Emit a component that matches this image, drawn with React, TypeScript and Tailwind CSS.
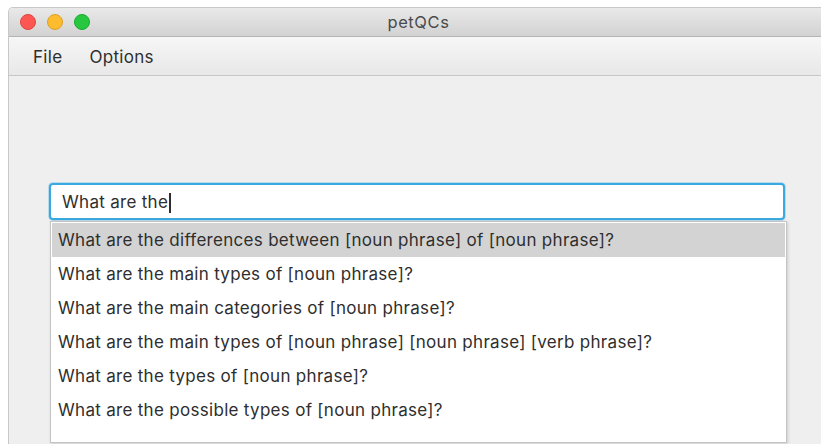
import React from "react";

const suggestions = [
  "What are the differences between [noun phrase] of [noun phrase]?",
  "What are the main types of [noun phrase]?",
  "What are the main categories of [noun phrase]?",
  "What are the main types of [noun phrase] [noun phrase] [verb phrase]?",
  "What are the types of [noun phrase]?",
  "What are the possible types of [noun phrase]?",
];

function TrafficLights() {
  return (
    <div className="flex items-center gap-[11px] pl-[11px]">
      <span className="block w-[16px] h-[16px] rounded-full bg-[#fc5753] border border-[#e0443e]" />
      <span className="block w-[16px] h-[16px] rounded-full bg-[#fdbc2e] border border-[#dea123]" />
      <span className="block w-[16px] h-[16px] rounded-full bg-[#27c840] border border-[#1aab29]" />
    </div>
  );
}

export default function App() {
  return (
    <div
      className="w-[821px] h-[444px] bg-white overflow-hidden pl-[8px] pt-[7px]"
      style={{ fontFamily: "Inter, 'Noto Sans', sans-serif" }}
    >
      <div className="w-[830px] h-[437px] flex flex-col border-l border-t border-[#c8c8c8] rounded-tl-[5px] overflow-hidden">
        {/* title bar */}
        <div className="relative h-[29px] shrink-0 flex items-center bg-gradient-to-b from-[#e9e9e9] to-[#d2d2d2] border-b border-[#b4b4b4]">
          <TrafficLights />
          <div className="absolute left-0 top-0 bottom-0 w-[813px] flex items-center justify-center pl-[6px] text-[16.5px] tracking-[0.6px] text-[#4a4a4a]">
            petQCs
          </div>
        </div>

        {/* menu bar */}
        <div className="h-[39px] shrink-0 flex items-center gap-[27px] pl-[24px] pt-[4px] bg-gradient-to-b from-[#f6f6f6] to-[#e8e8e8] border-b border-[#c6c6c6] text-[17px] tracking-[0.3px] text-[#2e2e2e]">
          <span>File</span>
          <span>Options</span>
        </div>

        {/* content */}
        <div className="flex-1 bg-[#efefef] pt-[107px] pl-[40px]">
          <div className="w-[736px] h-[37px] rounded-[4px] border-2 border-[#3aa9e0] bg-white shadow-[0_0_0_1px_rgba(120,190,235,0.45)] flex items-center pl-[11px] pt-[2px] text-[17px] tracking-[0.3px] text-[#2e2e2e]">
            <span>What are the</span>
            <span className="block w-[1.5px] h-[20px] bg-[#2e2e2e] ml-[1px]" />
          </div>

          <div className="ml-[1px] mt-[1px] w-[737px] h-[222px] bg-white border border-[#c4c4c4] shadow-[1px_1px_3px_rgba(0,0,0,0.15)] p-[1px] text-[17px] tracking-[0.3px] text-[#2e2e2e]">
            {suggestions.map((s, i) => (
              <div
                key={s}
                className={`h-[34px] flex items-center pl-[6px] pt-[2px] ${i === 0 ? "bg-[#d3d3d3]" : ""}`}
              >
                {s}
              </div>
            ))}
          </div>
        </div>
      </div>
    </div>
  );
}
